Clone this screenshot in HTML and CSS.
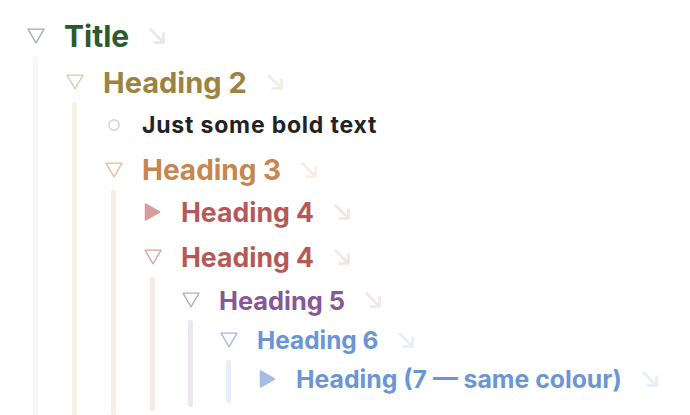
FILE: index.html
```html
<!DOCTYPE html>
<html>
<head>
<meta charset="utf-8">
<link rel="stylesheet" href="styles.css">
</head>
<body>
<div class="outline">
  <div class="row lv1">
    <svg class="tog" viewBox="0 0 18 16"><path d="M1 1.2 H17 L9 14.8 Z"/></svg>
    <span class="txt">Title</span>
    <svg class="arr" viewBox="0 0 20 20"><path d="M3 3 L16.5 16.5 M16.5 6.5 V16.5 H6.5"/></svg>
  </div>
  <div class="kids g1">
    <div class="guide"></div>
    <div class="list">
      <div class="row lv2">
        <svg class="tog" viewBox="0 0 18 16"><path d="M1 1.2 H17 L9 14.8 Z"/></svg>
        <span class="txt">Heading 2</span>
        <svg class="arr" viewBox="0 0 20 20"><path d="M3 3 L16.5 16.5 M16.5 6.5 V16.5 H6.5"/></svg>
      </div>
      <div class="kids g2">
        <div class="guide"></div>
        <div class="list">
          <div class="row lvb">
            <svg class="tog dot" viewBox="0 0 18 16"><circle cx="9" cy="8" r="5.2"/></svg>
            <span class="txt">Just some bold text</span>
          </div>
          <div class="row lv3">
            <svg class="tog" viewBox="0 0 18 16"><path d="M1 1.2 H17 L9 14.8 Z"/></svg>
            <span class="txt">Heading 3</span>
            <svg class="arr" viewBox="0 0 20 20"><path d="M3 3 L16.5 16.5 M16.5 6.5 V16.5 H6.5"/></svg>
          </div>
          <div class="kids g3">
            <div class="guide"></div>
            <div class="list">
              <div class="row lv4 first">
                <svg class="tog solid" viewBox="0 0 18 18"><path d="M1.5 1 L15.5 9 L1.5 17 Z"/></svg>
                <span class="txt">Heading 4</span>
                <svg class="arr" viewBox="0 0 20 20"><path d="M3 3 L16.5 16.5 M16.5 6.5 V16.5 H6.5"/></svg>
              </div>
              <div class="row lv4">
                <svg class="tog" viewBox="0 0 18 16"><path d="M1 1.2 H17 L9 14.8 Z"/></svg>
                <span class="txt">Heading 4</span>
                <svg class="arr" viewBox="0 0 20 20"><path d="M3 3 L16.5 16.5 M16.5 6.5 V16.5 H6.5"/></svg>
              </div>
              <div class="kids g4">
                <div class="guide"></div>
                <div class="list">
                  <div class="row lv5">
                    <svg class="tog" viewBox="0 0 18 16"><path d="M1 1.2 H17 L9 14.8 Z"/></svg>
                    <span class="txt">Heading 5</span>
                    <svg class="arr" viewBox="0 0 20 20"><path d="M3 3 L16.5 16.5 M16.5 6.5 V16.5 H6.5"/></svg>
                  </div>
                  <div class="kids g5">
                    <div class="guide"></div>
                    <div class="list">
                      <div class="row lv6">
                        <svg class="tog" viewBox="0 0 18 16"><path d="M1 1.2 H17 L9 14.8 Z"/></svg>
                        <span class="txt">Heading 6</span>
                        <svg class="arr" viewBox="0 0 20 20"><path d="M3 3 L16.5 16.5 M16.5 6.5 V16.5 H6.5"/></svg>
                      </div>
                      <div class="kids g6">
                        <div class="guide"></div>
                        <div class="list">
                          <div class="row lv7">
                            <svg class="tog solid" viewBox="0 0 18 18"><path d="M1.5 1 L15.5 9 L1.5 17 Z"/></svg>
                            <span class="txt">Heading (7 — same colour)</span>
                            <svg class="arr" viewBox="0 0 20 20"><path d="M3 3 L16.5 16.5 M16.5 6.5 V16.5 H6.5"/></svg>
                          </div>
                        </div>
                      </div>
                    </div>
                  </div>
                </div>
              </div>
            </div>
          </div>
        </div>
      </div>
    </div>
  </div>
</div>
</body>
</html>
```
FILE: styles.css
```css
html, body {
  margin: 0;
  padding: 0;
  background: #ffffff;
  overflow: hidden;
}
body {
  font-family: Inter, "Noto Sans", sans-serif;
  width: 690px;
  height: 415px;
}
.outline {
  padding: 16px 0 0 27px;
}
.row {
  display: flex;
  align-items: center;
  height: 40px;
  white-space: nowrap;
}
.tog {
  flex: none;
  width: 18px;
  height: 16px;
  margin-right: 19px;
  fill: none;
  stroke-width: 1.3;
  stroke-linejoin: round;
}
.tog.solid {
  height: 18px;
  stroke-width: 1.5;
}
.tog.dot {
  stroke: #c9c9c9;
  stroke-width: 1.2;
}
.txt {
  font-weight: 700;
}
.arr {
  flex: none;
  width: 20px;
  height: 20px;
  margin-left: 18px;
  fill: none;
  stroke-width: 2.7;
}
.kids {
  display: flex;
}
.guide {
  flex: none;
  width: 5px;
  margin-left: 6px;
  margin-right: 28px;
  border-radius: 3px;
}
.g4 > .guide,
.g5 > .guide {
  margin-right: 27px;
}
.list {
  flex: 1;
  padding-bottom: 4px;
}

.lv1 .txt { font-size: 30px; color: #2c5a2f; }
.lv1 .tog { stroke: #a2aca2; }
.lv1 .arr { stroke: #e5e9e4; }
.g1 > .guide { background: #f8f9f6; }

.lv2 { margin-top: 6px; }
.lv2 .txt { font-size: 29px; color: #9a843f; }
.lv2 .tog { stroke: #d8cda9; }
.lv2 .arr { stroke: #f1ede1; }
.g2 > .guide { background: #f5f1e5; }

.lvb { margin-top: 3px; }
.lvb .txt { font-size: 23px; letter-spacing: 0.8px; color: #232323; }

.lv3 { margin-top: 5px; }
.lv3 .txt { font-size: 28px; color: #c4874f; }
.lv3 .tog { stroke: #e2bc9d; }
.lv3 .arr { stroke: #f7ece4; }
.g3 > .guide { background: #f8ece7; }

.lv4 { margin-top: 5px; }
.lv4.first { margin-top: 2px; }
.lv4 .txt { font-size: 26.6px; color: #b75858; }
.lv4 .tog { stroke: #dca0a0; }
.lv4 .tog.solid { fill: #d99d9d; stroke: #d99d9d; }
.lv4 .arr { stroke: #f6e4e4; }
.g4 > .guide { background: #f7e9e9; }

.lv5 { margin-top: 3px; }
.lv5 .txt { font-size: 25.4px; color: #875797; }
.lv5 .tog { stroke: #bca5c6; }
.lv5 .arr { stroke: #efe8f2; }
.g5 > .guide { background: #eee6f0; }

.lv6 { margin-top: 0; }
.lv6 .txt { font-size: 24.4px; color: #6c95d3; }
.lv6 .tog { stroke: #9fb9e2; }
.lv6 .arr { stroke: #e8eef9; }
.g6 > .guide { background: #e7eef9; }

.lv7 { margin-top: -1px; }
.lv7 .txt { font-size: 24.8px; color: #6c95d3; }
.lv7 .tog.solid { fill: #a3bde7; stroke: #a3bde7; }
.lv7 .arr { stroke: #e8eef9; }
```
